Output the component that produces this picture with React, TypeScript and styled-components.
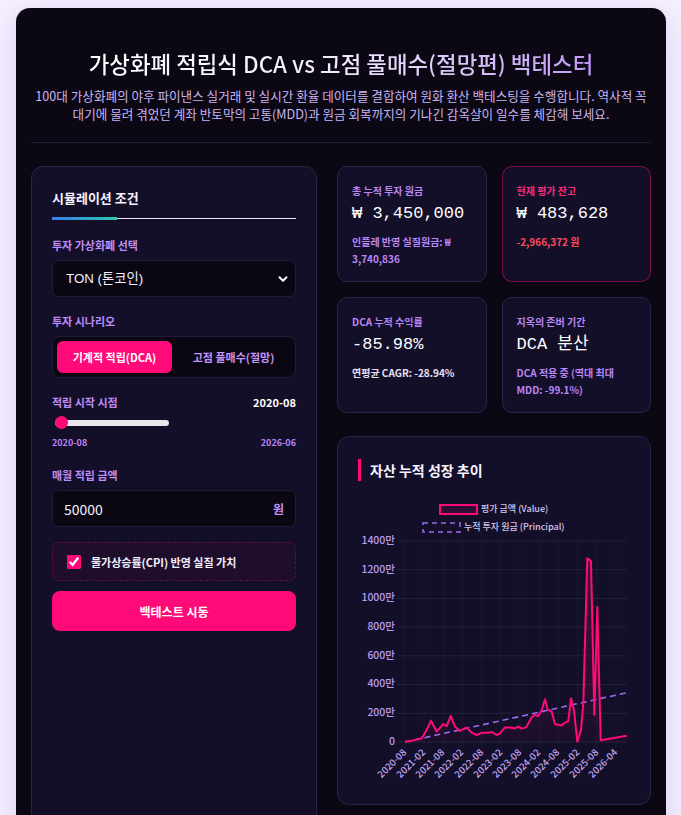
import React from "react";
import styled, { createGlobalStyle } from "styled-components";
import { ChevronDown } from "lucide-react";

const GlobalStyle = createGlobalStyle`
  html, body { margin: 0; padding: 0; background: #f5f0fd; }
  body { font-family: "Noto Sans CJK KR", "Noto Sans", sans-serif; }
  * { box-sizing: border-box; }
`;

const Page = styled.div`
  min-height: 815px;
  padding: 8px 15px 0 16px;
`;

const Shell = styled.div`
  background: #0b0814;
  border-radius: 14px;
  padding: 15px;
  box-shadow: 0 8px 30px rgba(130, 80, 220, 0.22);
  min-height: 840px;
`;

const Header = styled.header`
  text-align: center;
  padding: 26px 0 19px;
  border-bottom: 1px solid #241c38;
`;

const Title = styled.h1`
  margin: 0 0 9px;
  font-size: 22.4px;
  font-weight: 500;
  line-height: 1.3;
  display: inline-block;
  background: linear-gradient(90deg, #ffffff 0%, #f1eaff 50%, #c09af5 100%);
  -webkit-background-clip: text;
  background-clip: text;
  color: transparent;
`;

const Subtitle = styled.p`
  margin: 0;
  font-size: 12.6px;
  line-height: 18px;
  color: #c9b4f3;
`;

const Main = styled.div`
  display: grid;
  grid-template-columns: 286px 1fr;
  gap: 20px;
  margin-top: 23px;
  align-items: start;
`;

const Panel = styled.section`
  background: #140f29;
  border: 1px solid #2b2347;
  border-radius: 12px;
  padding: 21px 20px 24px;
  min-height: 700px;
`;

const PanelTitle = styled.h2`
  position: relative;
  margin: 0;
  font-size: 13px;
  line-height: 20px;
  font-weight: 700;
  color: #f5f1ff;
  padding-bottom: 10px;
  border-bottom: 1.5px solid #ebe7f3;
  &::after {
    content: "";
    position: absolute;
    left: 0;
    bottom: -2px;
    width: 65px;
    height: 3px;
    background: linear-gradient(90deg, #3b7cf0, #2cc9b0);
  }
`;

const Field = styled.div<{ $gap?: number }>`
  margin-top: ${(p) => p.$gap ?? 16}px;
`;

const Label = styled.div`
  font-size: 11px;
  line-height: 16px;
  font-weight: 700;
  color: #bd8cf7;
  margin-bottom: 7px;
`;

const LabelRow = styled.div`
  display: flex;
  justify-content: space-between;
  align-items: center;
  font-size: 11px;
  line-height: 16px;
  font-weight: 700;
  color: #bd8cf7;
`;

const LabelValue = styled.span`
  color: #ffffff;
`;

const SelectWrap = styled.div`
  position: relative;
`;

const Select = styled.select`
  appearance: none;
  -webkit-appearance: none;
  width: 100%;
  height: 37px;
  background: #0a0713;
  border: 1px solid #231b3b;
  border-radius: 6px;
  color: #f3efff;
  font-family: "Liberation Sans", "Noto Sans CJK KR", sans-serif;
  font-size: 13.3px;
  padding: 0 13px;
  outline: none;
`;

const SelectIcon = styled.span`
  position: absolute;
  right: 6px;
  top: 50%;
  transform: translateY(-50%);
  display: flex;
  color: #ffffff;
  pointer-events: none;
`;

const Toggle = styled.div`
  display: grid;
  grid-template-columns: 1fr 1fr;
  gap: 4px;
  padding: 4px;
  background: #0a0713;
  border: 1px solid #231b3b;
  border-radius: 8px;
`;

const ToggleButton = styled.button<{ $active?: boolean }>`
  height: 32px;
  border: none;
  border-radius: 6px;
  font-family: inherit;
  font-size: 11px;
  font-weight: 700;
  background: ${(p) => (p.$active ? "#ff0a78" : "transparent")};
  color: ${(p) => (p.$active ? "#ffffff" : "#c494f8")};
  cursor: pointer;
`;

const Range = styled.input`
  -webkit-appearance: none;
  appearance: none;
  display: block;
  width: 114px;
  height: 13px;
  margin: 6px 0 0 3px;
  background: transparent;
  &::-webkit-slider-runnable-track {
    height: 6px;
    border-radius: 3px;
    background: #e9e6ee;
  }
  &::-webkit-slider-thumb {
    -webkit-appearance: none;
    width: 13px;
    height: 13px;
    margin-top: -3.5px;
    border-radius: 50%;
    background: #ff0a78;
    border: none;
  }
`;

const RangeEnds = styled.div`
  display: flex;
  justify-content: space-between;
  margin-top: 7px;
  font-size: 9px;
  line-height: 14px;
  font-weight: 600;
  color: #b883f5;
`;

const AmountBox = styled.div`
  display: flex;
  align-items: center;
  height: 37px;
  background: #0a0713;
  border: 1px solid #231b3b;
  border-radius: 6px;
  padding: 0 11px 0 11px;
`;

const AmountInput = styled.input`
  flex: 1;
  min-width: 0;
  background: transparent;
  border: none;
  outline: none;
  color: #f5f2ff;
  font-family: inherit;
  font-size: 14px;
  padding: 0;
`;

const Unit = styled.span`
  font-size: 12px;
  font-weight: 700;
  color: #c08ff8;
`;

const CheckBox = styled.label`
  display: flex;
  align-items: center;
  gap: 10px;
  height: 39px;
  padding: 0 14px;
  border: 1px dashed rgba(255, 20, 120, 0.28);
  border-radius: 6px;
  background: rgba(255, 10, 120, 0.045);
  font-size: 11px;
  font-weight: 700;
  color: #f3efff;
`;

const Check = styled.input`
  width: 14px;
  height: 14px;
  margin: 0;
  accent-color: #ff0a78;
`;

const RunButton = styled.button`
  width: 100%;
  height: 40px;
  border: none;
  border-radius: 8px;
  background: #ff0a78;
  color: #ffffff;
  font-family: inherit;
  font-size: 12px;
  font-weight: 700;
  cursor: pointer;
`;

const RightCol = styled.div`
  display: flex;
  flex-direction: column;
  gap: 23px;
`;

const StatGrid = styled.div`
  display: grid;
  grid-template-columns: 1fr 1fr;
  gap: 15px;
`;

const StatCard = styled.div<{ $alert?: boolean }>`
  background: #140f29;
  border: 1px solid ${(p) => (p.$alert ? "rgba(255, 20, 120, 0.42)" : "#2b2347")};
  border-radius: 10px;
  padding: 16px 14px 14px;
`;

const StatLabel = styled.div<{ $alert?: boolean }>`
  font-size: 10px;
  line-height: 15px;
  font-weight: 700;
  color: ${(p) => (p.$alert ? "#ff2a7a" : "#b986f6")};
`;

const StatValue = styled.div`
  margin-top: 4px;
  font-family: "Liberation Mono", "DejaVu Sans Mono", "Noto Sans CJK KR", monospace;
  font-size: 17px;
  line-height: 24px;
  color: #ffffff;
`;

const StatSub = styled.div<{ $tone?: "purple" | "red" | "light" }>`
  margin-top: 7px;
  font-size: 10px;
  line-height: 17px;
  font-weight: 700;
  color: ${(p) =>
    p.$tone === "red" ? "#ff4a5c" : p.$tone === "light" ? "#e8e0f6" : "#b986f6"};
`;

const ChartCard = styled.div`
  background: #140f29;
  border: 1px solid #2b2347;
  border-radius: 12px;
  padding: 22px 14px 16px;
`;

const ChartTitle = styled.h3`
  margin: 0 0 17px 6px;
  padding-left: 9px;
  border-left: 3px solid #ff0a78;
  font-size: 14px;
  line-height: 22px;
  font-weight: 700;
  color: #f7f3ff;
`;

const ChartSvg = styled.svg`
  display: block;
  overflow: visible;
  font-family: "Noto Sans CJK KR", "Noto Sans", sans-serif;
`;

const OX = 352;
const sx = (x: number) => x - OX;
const sy = (v: number) => 244 - v * (201 / 1400);

const valuePts: [number, number][] = [
  [405, 2], [410, 8], [415, 14], [421.7, 25], [426.7, 84], [431, 149], [436.7, 72],
  [443.3, 125], [446.7, 111], [450.7, 181], [455, 107], [460, 77], [466.7, 102],
  [471.7, 65], [476.7, 49], [481.7, 65], [488.3, 65], [491.7, 70], [496.7, 49],
  [500, 60], [505, 102], [510, 102], [515, 95], [518.3, 107], [521.7, 93], [526, 102],
  [531.7, 172], [535, 188], [538.3, 181], [541.7, 223], [545, 297], [547.7, 227],
  [551.7, 211], [555, 125], [561.7, 114], [565, 135], [568.3, 146], [571, 304],
  [574, 223], [577.3, 2], [581, 84], [583.3, 269], [587.3, 1280], [591, 1260],
  [594.3, 190], [597.3, 940], [600.7, 12], [626.7, 44],
];

const linePath = valuePts
  .map(([x, v], i) => `${i ? "L" : "M"}${sx(x).toFixed(1)} ${sy(v).toFixed(1)}`)
  .join(" ");
const areaPath = `${linePath} L${sx(626.7)} ${sy(0)} L${sx(405)} ${sy(0)} Z`;

const yTicks = [0, 200, 400, 600, 800, 1000, 1200, 1400];
const xTicks: [number, string][] = [
  [405, "2020-08"], [424, "2021-02"], [443, "2021-08"], [462, "2022-02"],
  [482, "2022-08"], [501, "2023-02"], [520, "2023-08"], [539, "2024-02"],
  [558, "2024-08"], [578, "2025-02"], [597, "2025-08"], [616, "2026-04"],
];

function GrowthChart() {
  return (
    <ChartSvg width={284} height={290} viewBox="0 0 284 290">
      <defs>
        <linearGradient id="valFill" x1="0" y1="0" x2="0" y2="1">
          <stop offset="0%" stopColor="#ff0a78" stopOpacity="0.22" />
          <stop offset="100%" stopColor="#ff0a78" stopOpacity="0.03" />
        </linearGradient>
      </defs>

      {/* legend */}
      <rect x={88} y={7} width={37} height={9} fill="rgba(255,10,120,0.12)" stroke="#ff0a78" strokeWidth={2} />
      <text x={129} y={12} fontSize={9} fontWeight={500} fill="#d4c6ee" dominantBaseline="middle">
        평가 금액 (Value)
      </text>
      <rect x={71} y={25} width={37} height={9} fill="none" stroke="#9b6cf0" strokeWidth={1.5} strokeDasharray="5 4" />
      <text x={112} y={30} fontSize={9} fontWeight={500} fill="#d4c6ee" dominantBaseline="middle">
        누적 투자 원금 (Principal)
      </text>

      {/* grid */}
      {yTicks.map((v) => (
        <line key={`h${v}`} x1={sx(397)} x2={sx(627)} y1={sy(v)} y2={sy(v)} stroke="rgba(255,255,255,0.07)" strokeWidth={1} />
      ))}
      {xTicks.map(([x]) => (
        <line key={`v${x}`} x1={sx(x)} x2={sx(x)} y1={sy(1400)} y2={sy(0) + 7} stroke="rgba(255,255,255,0.045)" strokeWidth={1} />
      ))}

      {/* y labels */}
      {yTicks.map((v) => (
        <text key={`yl${v}`} x={43} y={sy(v)} fontSize={10.5} fontWeight={500} fill="#b79cf0" textAnchor="end" dominantBaseline="middle">
          {v === 0 ? "0" : `${v}만`}
        </text>
      ))}

      {/* x labels */}
      {xTicks.map(([x, t]) => (
        <text
          key={`xl${t}`}
          x={sx(x) + 2}
          y={sy(0) + 11}
          fontSize={9.5}
          fontWeight={500}
          fill="#c0a6f2"
          textAnchor="end"
          transform={`rotate(-45 ${sx(x) + 2} ${sy(0) + 11})`}
        >
          {t}
        </text>
      ))}

      {/* series */}
      <path d={areaPath} fill="url(#valFill)" />
      <line
        x1={sx(405)}
        y1={sy(0)}
        x2={sx(626.7)}
        y2={sy(343)}
        stroke="#9b6cf0"
        strokeWidth={1.6}
        strokeDasharray="6 4"
      />
      <path d={linePath} fill="none" stroke="#ff0a78" strokeWidth={2} strokeLinejoin="round" />
    </ChartSvg>
  );
}

export default function App() {
  return (
    <>
      <GlobalStyle />
      <Page>
        <Shell>
          <Header>
            <Title>가상화폐 적립식 DCA vs 고점 풀매수(절망편) 백테스터</Title>
            <Subtitle>
              100대 가상화폐의 야후 파이낸스 실거래 및 실시간 환율 데이터를 결합하여 원화 환산 백테스팅을 수행합니다. 역사적 꼭대기에 물려 겪었던 계좌 반토막의 고통(MDD)과 원금 회복까지의 기나긴 감옥살이 일수를 체감해 보세요.
            </Subtitle>
          </Header>

          <Main>
            <Panel>
              <PanelTitle>시뮬레이션 조건</PanelTitle>

              <Field $gap={18}>
                <Label>투자 가상화폐 선택</Label>
                <SelectWrap>
                  <Select defaultValue="TON">
                    <option value="TON">TON (톤코인)</option>
                    <option value="BTC">BTC (비트코인)</option>
                    <option value="ETH">ETH (이더리움)</option>
                  </Select>
                  <SelectIcon>
                    <ChevronDown size={14} strokeWidth={3.2} />
                  </SelectIcon>
                </SelectWrap>
              </Field>

              <Field>
                <Label>투자 시나리오</Label>
                <Toggle>
                  <ToggleButton $active>기계적 적립(DCA)</ToggleButton>
                  <ToggleButton>고점 풀매수(절망)</ToggleButton>
                </Toggle>
              </Field>

              <Field>
                <LabelRow>
                  <span>적립 시작 시점</span>
                  <LabelValue>2020-08</LabelValue>
                </LabelRow>
                <Range type="range" min={0} max={70} defaultValue={0} />
                <RangeEnds>
                  <span>2020-08</span>
                  <span>2026-06</span>
                </RangeEnds>
              </Field>

              <Field $gap={17}>
                <Label>매월 적립 금액</Label>
                <AmountBox>
                  <AmountInput type="text" defaultValue="50000" />
                  <Unit>원</Unit>
                </AmountBox>
              </Field>

              <Field $gap={15}>
                <CheckBox>
                  <Check type="checkbox" defaultChecked />
                  물가상승률(CPI) 반영 실질 가치
                </CheckBox>
              </Field>

              <Field $gap={10}>
                <RunButton>백테스트 시동</RunButton>
              </Field>
            </Panel>

            <RightCol>
              <StatGrid>
                <StatCard>
                  <StatLabel>총 누적 투자 원금</StatLabel>
                  <StatValue>₩ 3,450,000</StatValue>
                  <StatSub>인플레 반영 실질원금: ₩ 3,740,836</StatSub>
                </StatCard>
                <StatCard $alert>
                  <StatLabel $alert>현재 평가 잔고</StatLabel>
                  <StatValue>₩ 483,628</StatValue>
                  <StatSub $tone="red">-2,966,372 원</StatSub>
                </StatCard>
                <StatCard>
                  <StatLabel>DCA 누적 수익률</StatLabel>
                  <StatValue>-85.98%</StatValue>
                  <StatSub $tone="light">연평균 CAGR: -28.94%</StatSub>
                </StatCard>
                <StatCard>
                  <StatLabel>지옥의 존버 기간</StatLabel>
                  <StatValue>DCA 분산</StatValue>
                  <StatSub>DCA 적용 중 (역대 최대 MDD: -99.1%)</StatSub>
                </StatCard>
              </StatGrid>

              <ChartCard>
                <ChartTitle>자산 누적 성장 추이</ChartTitle>
                <GrowthChart />
              </ChartCard>
            </RightCol>
          </Main>
        </Shell>
      </Page>
    </>
  );
}
